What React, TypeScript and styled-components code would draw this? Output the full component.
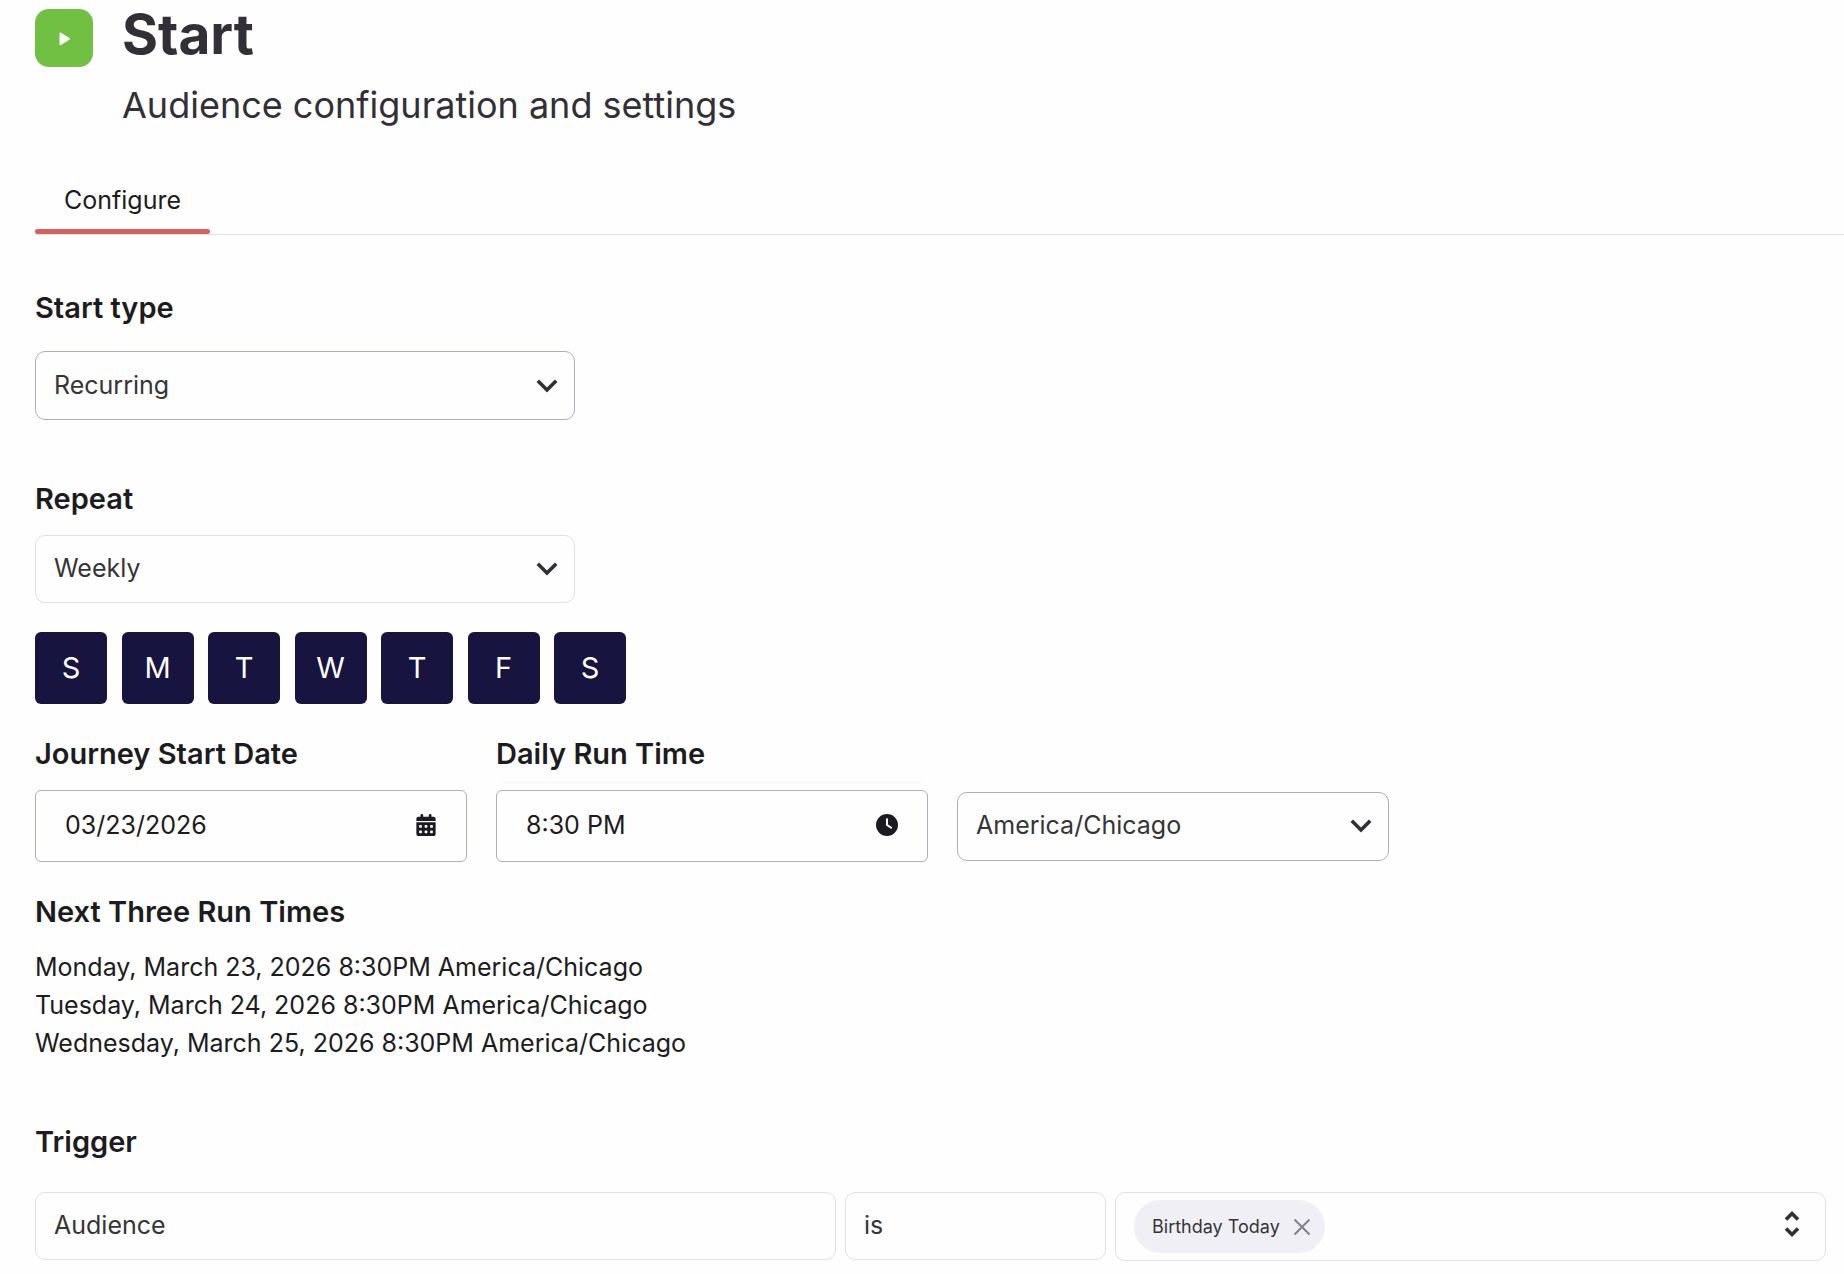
import React, { useState } from "react";
import styled, { createGlobalStyle } from "styled-components";
import { FaCalendarDays, FaClock } from "react-icons/fa6";

const GlobalStyle = createGlobalStyle`
  *, *::before, *::after { box-sizing: border-box; }
  body {
    margin: 0;
    background: #fefefe;
    color: #1c1b20;
    font-family: Inter, "Liberation Sans", sans-serif;
    font-size: 25px;
    line-height: 38px;
  }
  button, input, select { font: inherit; color: inherit; }
`;

const Page = styled.main`
  padding: 9px 0 13px 35px;
`;

const Header = styled.header`
  display: flex;
  align-items: flex-start;
  gap: 29px;
  color: #322f37;
`;

const StartBadge = styled.div`
  display: grid;
  place-items: center;
  width: 58px;
  height: 58px;
  border-radius: 14px;
  background: #72c043;
`;

const Title = styled.h1`
  margin: 0;
  font-size: 55px;
  line-height: 50px;
  font-weight: 700;
`;

const Subtitle = styled.p`
  margin: 24px 0 0;
  font-size: 36px;
  line-height: 44px;
`;

const Tabs = styled.nav`
  display: flex;
  margin-top: 54px;
  border-bottom: 1px solid #e1e0e9;
`;

const Tab = styled.button`
  padding: 0 29px 10px;
  border: 0;
  background: none;
  cursor: pointer;

  &::after {
    content: "";
    display: block;
    height: 5px;
    margin: 10px -29px -10px;
    border-radius: 3px;
    background: #d65f5f;
  }
`;

const Section = styled.section<{ $top: number; $gap?: number }>`
  display: flex;
  flex-direction: column;
  gap: ${(p) => p.$gap ?? 18}px;
  margin-top: ${(p) => p.$top}px;
`;

const headingText = `
  margin: 0;
  font-size: 29px;
  line-height: 36px;
  font-weight: 600;
`;

const Heading = styled.h2`
  ${headingText}
`;

const Label = styled.label`
  ${headingText}
`;

const SelectWrap = styled.div<{ $width: number }>`
  display: grid;
  align-items: center;
  width: 100%;
  max-width: ${(p) => p.$width}px;

  > * { grid-area: 1 / 1; }
  > svg {
    justify-self: end;
    margin-right: 16px;
    pointer-events: none;
  }
`;

const Select = styled.select<{ $soft?: boolean }>`
  appearance: none;
  width: 100%;
  height: ${(p) => (p.$soft ? 68 : 69)}px;
  padding: 0 50px 2px 18px;
  border: 1px solid ${(p) => (p.$soft ? "#e1e0e9" : "#afaeb8")};
  border-radius: 10px;
  background: transparent;
  color: #353535;
`;

const Days = styled.div`
  display: flex;
  justify-content: space-between;
  max-width: 591px;
  margin-top: 29px;
`;

const Day = styled.button`
  width: 72px;
  height: 72px;
  padding: 0;
  border: 0;
  border-radius: 6px;
  background: ${(p) => (p["aria-pressed"] ? "#17153f" : "#f0eff5")};
  color: ${(p) => (p["aria-pressed"] ? "#ffffff" : "#17153f")};
  font-size: 29px;
  cursor: pointer;
`;

const Schedule = styled.div`
  display: grid;
  grid-template-columns: repeat(3, minmax(0, 432px));
  align-items: end;
  gap: 29px;
  margin-top: 32px;
`;

const Field = styled.div`
  display: flex;
  flex-direction: column;
  gap: 18px;
`;

const Centered = styled.div`
  display: flex;
  align-items: center;
  height: 72px;
`;

const IconInput = styled.div`
  display: flex;
  align-items: center;
  height: 72px;
  padding: 0 29px 2px;
  border: 1px solid #afaeb8;
  border-radius: 6px;

  > svg {
    width: auto;
    height: 22px;
  }
`;

const BareInput = styled.input`
  flex: 1;
  min-width: 0;
  padding: 0;
  border: 0;
  outline: 0;
  background: none;
`;

const TimeLabel = styled(Label)`
  position: relative;

  &::after {
    content: "";
    position: absolute;
    left: 6px;
    right: 6px;
    top: 46px;
    height: 1px;
    background: #f4f3fa;
  }
`;

const RunTimes = styled.ul`
  margin: 0;
  padding: 0;
  list-style: none;
`;

const TriggerRow = styled.div`
  display: grid;
  grid-template-columns: 801fr 261fr 711fr;
  align-items: start;
  gap: 9px;
  margin-right: 18px;
`;

const TextBox = styled.input`
  width: 100%;
  height: 68px;
  padding: 0 18px 2px;
  border: 1px solid #e1e0e9;
  border-radius: 10px;
  background: transparent;
  color: #353535;
`;

const TagBox = styled.div`
  display: flex;
  align-items: center;
  justify-content: space-between;
  min-width: 0;
  height: 69px;
  padding: 0 25px 0 18px;
  border: 1px solid #e1e0e9;
  border-radius: 10px;
`;

const Tag = styled.span`
  display: inline-flex;
  align-items: center;
  gap: 13px;
  height: 53px;
  padding: 0 14px 0 18px;
  border-radius: 27px;
  background: #f0eff5;
  color: #353535;
  font-size: 18px;
`;

const TagList = styled.div`
  display: flex;
  gap: 6px;
`;

const IconButton = styled.button`
  display: grid;
  place-items: center;
  padding: 0;
  border: 0;
  background: none;
  cursor: pointer;
`;

const ExpandButton = styled(IconButton)`
  padding-bottom: 6px;
`;

const Chevron = () => (
  <svg width="23" height="14" viewBox="0 0 23 14" fill="none" aria-hidden="true">
    <path d="M1.8 1.8 11 11l9.2-9.2" stroke="#322f37" strokeWidth="3.6" />
  </svg>
);

const DAYS = ["S", "M", "T", "W", "T", "F", "S"];

const RUN_TIMES = [
  "Monday, March 23, 2026 8:30PM America/Chicago",
  "Tuesday, March 24, 2026 8:30PM America/Chicago",
  "Wednesday, March 25, 2026 8:30PM America/Chicago",
];

export default function App() {
  const [active, setActive] = useState(DAYS.map(() => true));
  const [tags, setTags] = useState(["Birthday Today"]);

  return (
    <>
      <GlobalStyle />
      <Page>
        <Header>
          <StartBadge>
            <svg width="14" height="16" viewBox="0 0 14 16" aria-hidden="true">
              <path d="M3.2 3.2v11.4L12.4 8.9z" fill="#fff" stroke="#fff" strokeWidth="1.4" strokeLinejoin="round" />
            </svg>
          </StartBadge>
          <div>
            <Title>Start</Title>
            <Subtitle>Audience configuration and settings</Subtitle>
          </div>
        </Header>

        <Tabs>
          <Tab type="button">Configure</Tab>
        </Tabs>

        <Section $top={55} $gap={25}>
          <Label htmlFor="start-type">Start type</Label>
          <SelectWrap $width={540}>
            <Select id="start-type" defaultValue="Recurring">
              <option>Recurring</option>
              <option>One time</option>
            </Select>
            <Chevron />
          </SelectWrap>
        </Section>

        <Section $top={61}>
          <Label htmlFor="repeat">Repeat</Label>
          <SelectWrap $width={540}>
            <Select id="repeat" $soft defaultValue="Weekly">
              <option>Daily</option>
              <option>Weekly</option>
              <option>Monthly</option>
            </Select>
            <Chevron />
          </SelectWrap>
        </Section>

        <Days role="group" aria-label="Repeat on">
          {DAYS.map((day, i) => (
            <Day
              key={i}
              type="button"
              aria-pressed={active[i]}
              onClick={() => setActive(active.map((on, j) => (j === i ? !on : on)))}
            >
              {day}
            </Day>
          ))}
        </Days>

        <Schedule>
          <Field>
            <Label htmlFor="start-date">Journey Start Date</Label>
            <IconInput>
              <BareInput id="start-date" type="text" defaultValue="03/23/2026" />
              <FaCalendarDays aria-hidden="true" />
            </IconInput>
          </Field>
          <Field>
            <TimeLabel htmlFor="run-time">Daily Run Time</TimeLabel>
            <IconInput>
              <BareInput id="run-time" type="text" defaultValue="8:30 PM" />
              <FaClock aria-hidden="true" />
            </IconInput>
          </Field>
          <Centered>
            <SelectWrap $width={432}>
              <Select aria-label="Time zone" defaultValue="America/Chicago">
                <option>America/Chicago</option>
                <option>America/New_York</option>
              </Select>
              <Chevron />
            </SelectWrap>
          </Centered>
        </Schedule>

        <Section $top={32}>
          <Heading>Next Three Run Times</Heading>
          <RunTimes>
            {RUN_TIMES.map((time) => (
              <li key={time}>{time}</li>
            ))}
          </RunTimes>
        </Section>

        <Section $top={62} $gap={32}>
          <Heading>Trigger</Heading>
          <TriggerRow>
            <TextBox aria-label="Trigger source" defaultValue="Audience" />
            <TextBox aria-label="Condition" defaultValue="is" />
            <TagBox>
              <TagList>
                {tags.map((tag) => (
                  <Tag key={tag}>
                    {tag}
                    <IconButton
                      type="button"
                      aria-label={`Remove ${tag}`}
                      onClick={() => setTags(tags.filter((t) => t !== tag))}
                    >
                      <svg width="18" height="18" viewBox="0 0 18 18" fill="none" aria-hidden="true">
                        <path d="m1.5 1.5 15 15m0-15-15 15" stroke="#82808a" strokeWidth="2" />
                      </svg>
                    </IconButton>
                  </Tag>
                ))}
              </TagList>
              <ExpandButton type="button" aria-label="Choose audiences">
                <svg width="16" height="26" viewBox="0 0 16 26" fill="none" aria-hidden="true">
                  <path d="m2 8.5 6-6 6 6M2 17.5l6 6 6-6" stroke="#322f37" strokeWidth="3.6" />
                </svg>
              </ExpandButton>
            </TagBox>
          </TriggerRow>
        </Section>
      </Page>
    </>
  );
}
